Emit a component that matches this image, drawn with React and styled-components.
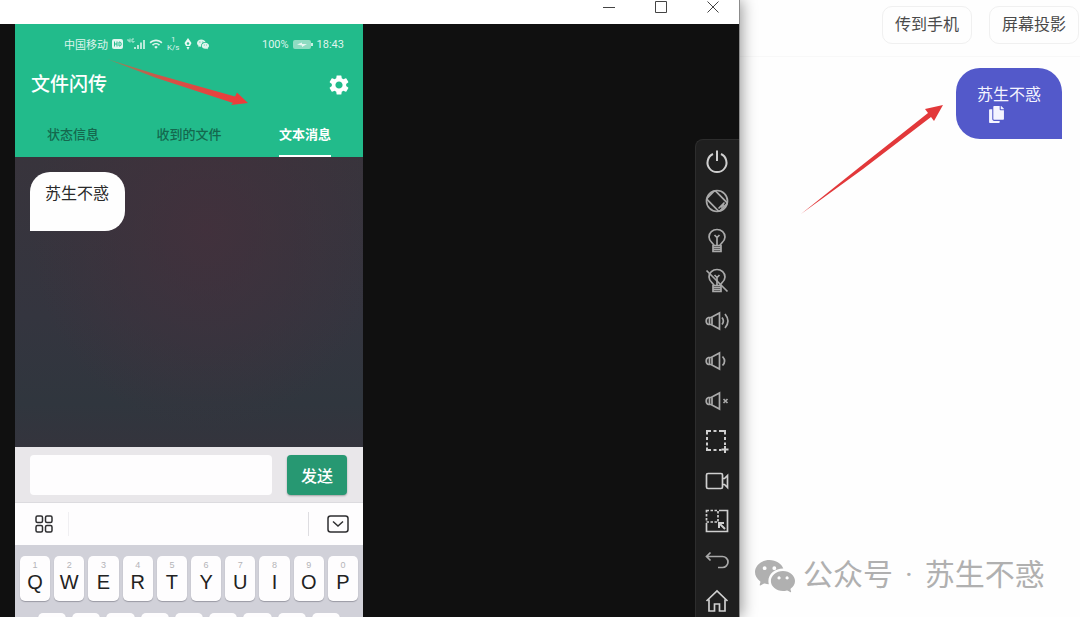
import React from "react";
import styled, { createGlobalStyle } from "styled-components";
import { BsWechat } from "react-icons/bs";
import { FaCopy } from "react-icons/fa";
import { MdSettings, MdWifi } from "react-icons/md";

const TABS = ["状态信息", "收到的文件", "文本消息"];
const FIRST_ROW = ["Q", "W", "E", "R", "T", "Y", "U", "I", "O", "P"];
const SECOND_ROW = ["A", "S", "D", "F", "G", "H", "J", "K", "L"];

const speaker = (
  <>
    <path d="M14.5 4v16L6 15.500H3.500C2 15 1.200 13.500 1.200 12s.8-3 2.300-3.500H6z" />
    <path d="M4.500 8.500v7M7 8.300v7.400" />
  </>
);

const bulb = (
  <>
    <path d="M9 16.500c0-2-5-3.500-5-8.500a8 7.500 0 0 1 16 0c0 5-5 6.500-5 8.500" />
    <path d="M12 16.500V7M9.500 6l2.500 2.500L14.500 6" />
    <path d="M8 16.500h8v6H8zM8 18.500h8M8 20.500h8" />
  </>
);

const TOOLS = [
  {
    label: "电源",
    bright: true,
    icon: <path d="M8 5a9.500 9.500 0 1 0 8 0M12 1.500v10.500" strokeWidth="2" />,
  },
  {
    label: "旋转屏幕",
    icon: (
      <>
        <circle cx="12" cy="12" r="10.500" />
        <rect
          x="6"
          y="3"
          width="12"
          height="18"
          rx="1.500"
          transform="rotate(-45 12 12)"
        />
        <path d="M13.500 19.500l6-6M16 18.500l3-3" />
      </>
    ),
  },
  { label: "点亮屏幕", icon: bulb },
  {
    label: "关闭屏幕",
    icon: (
      <>
        {bulb}
        <path d="M1.500 1.500l21 21" />
      </>
    ),
  },
  {
    label: "音量加",
    icon: (
      <>
        {speaker}
        <path d="M17 8.500c1.800 2.300 1.800 4.700 0 7M20 5c3.800 4.500 3.800 9.500 0 14" />
      </>
    ),
  },
  {
    label: "音量减",
    icon: (
      <>
        {speaker}
        <path d="M17.500 7.500c2.800 3 2.800 6 0 9" />
      </>
    ),
  },
  {
    label: "静音",
    icon: (
      <>
        {speaker}
        <path d="M18.500 10l4 4M22.500 10l-4 4" />
      </>
    ),
  },
  {
    label: "截屏",
    bright: true,
    icon: (
      <>
        <path
          d="M2 5.500V2h4M8.500 2h3M14 2h6v3.500M20 8v3M20 13.500V16M2 8v3M2 13.500v3M2 18.500V21h4M8.500 21h3M14 21h2.500"
          strokeWidth="2"
        />
        <path d="M20 17v7M16.500 20.500h7" strokeWidth="2" />
      </>
    ),
  },
  {
    label: "录屏",
    bright: true,
    icon: (
      <>
        <rect x="1.500" y="4.500" width="16" height="15" rx="1.500" />
        <path d="M17.500 9.500h2l3-3v12l-3-3h-2" />
      </>
    ),
  },
  {
    label: "缩放",
    bright: true,
    icon: (
      <>
        <path d="M14 1.500h8.500v21H1.500V14" />
        <path d="M1.500 1.500h11.500v11.500H1.500z" strokeDasharray="2.500 1.500" />
        <path d="M20 20l-6-6M14 19v-5h5" strokeWidth="2" />
      </>
    ),
  },
  {
    label: "返回",
    icon: <path d="M5.500 3.500L1.500 7.500l4 4M1.500 7.500H17.500a5.500 5.500 0 0 1 0 11H13" />,
  },
  {
    label: "主页",
    bright: true,
    icon: (
      <path d="M1.500 12L12 2l10.500 10M4 10.500V22h5.500v-7h5v7H20V10.500" />
    ),
  },
];

const App = () => {
  return (
    <>
      <GlobalStyle />
      <Screen>
        <MirrorWindow>
          <TitleBar>
            <WindowButton aria-label="最小化">
              <svg width="12" height="12" viewBox="0 0 12 12">
                <path d="M0 6.500h12" />
              </svg>
            </WindowButton>
            <WindowButton aria-label="最大化">
              <svg width="12" height="12" viewBox="0 0 12 12">
                <path d="M.5.5h11v11H.5z" />
              </svg>
            </WindowButton>
            <WindowButton aria-label="关闭">
              <svg width="12" height="12" viewBox="0 0 12 12">
                <path d="M.5.5l11 11M11.500.5l-11 11" />
              </svg>
            </WindowButton>
          </TitleBar>
          <WindowBody>
            <Phone>
              <AppHeader>
                <StatusBar>
                  <StatusGroup>
                    <span>中国移动</span>
                    <svg width="11" height="10" viewBox="0 0 11 10">
                      <rect width="11" height="10" rx="2" fill="#e2f6ef" />
                      <path
                        d="M2.500 2.500v5M5 2.500v5M2.500 5H5M7 3v4h.7a1.500 2 0 0 0 0-4z"
                        stroke="#22bb8b"
                        fill="none"
                      />
                    </svg>
                    <svg width="18" height="12" viewBox="0 0 18 12">
                      <path
                        d="M1 1v2h2M3 .5v4M7 1H5v3h2V3"
                        stroke="#b9ead9"
                        fill="none"
                      />
                      <path
                        d="M8 11V9M11 11V7M14 11V4.500M17 11V2"
                        stroke="#c9efe2"
                        strokeWidth="1.800"
                      />
                    </svg>
                    <MdWifi size={14} />
                    <NetSpeed>
                      <span>1</span>
                      <span>K/s</span>
                    </NetSpeed>
                    <svg width="10" height="12" viewBox="0 0 10 12">
                      <path
                        d="M5 0l3.500 5L7 8H3L1.500 5zM3.500 9h3L5 12z"
                        fill="#e8f8f2"
                      />
                      <circle cx="5" cy="5.500" r="1.200" fill="#22bb8b" />
                    </svg>
                    <BsWechat size={12} />
                  </StatusGroup>
                  <StatusGroup>
                    <span>100%</span>
                    <svg width="20" height="9" viewBox="0 0 20 9">
                      <rect width="18" height="9" rx="2" fill="#8fdcc2" />
                      <path d="M19 3v3" stroke="#c9efe2" strokeWidth="2" />
                      <path d="M4 4.500l5-2v1.500h5l-5 3V5.500z" fill="#e8f8f2" />
                    </svg>
                    <span>18:43</span>
                  </StatusGroup>
                </StatusBar>
                <TitleRow>
                  <AppTitle>文件闪传</AppTitle>
                  <IconButton aria-label="设置">
                    <MdSettings size={24} />
                  </IconButton>
                </TitleRow>
                <TabList role="tablist">
                  {TABS.map((name, index) => (
                    <Tab
                      key={name}
                      role="tab"
                      aria-selected={index === 2}
                      $active={index === 2}
                    >
                      <span>{name}</span>
                    </Tab>
                  ))}
                </TabList>
                <HeaderArrow viewBox="0 0 142 46" aria-hidden="true">
                  <defs>
                    <linearGradient id="fadeIn">
                      <stop offset="0" stopColor="#8a8a5c" />
                      <stop offset="0.4" stopColor="#d35247" />
                      <stop offset="1" stopColor="#f03a3a" />
                    </linearGradient>
                  </defs>
                  <path
                    d="M0 0L48 15 128 37.500 130 33.500 141 44 124 46 126 44 48 18.500z"
                    fill="url(#fadeIn)"
                  />
                </HeaderArrow>
              </AppHeader>
              <Messages>
                <ReceivedBubble>苏生不惑</ReceivedBubble>
              </Messages>
              <Composer>
                <MessageInput aria-label="消息" />
                <SendButton>发送</SendButton>
              </Composer>
              <KeyboardTools>
                <ToolCell>
                  <IconButton aria-label="键盘菜单">
                    <svg
                      width="18"
                      height="18"
                      viewBox="0 0 18 18"
                      fill="none"
                      stroke="#2e2e30"
                      strokeWidth="1.500"
                    >
                      <rect x="1" y="1" width="6.500" height="6.500" rx="1.500" />
                      <rect x="10.500" y="1" width="6.500" height="6.500" rx="1.500" />
                      <rect x="1" y="10.500" width="6.500" height="6.500" rx="1.500" />
                      <rect x="10.500" y="10.500" width="6.500" height="6.500" rx="1.500" />
                    </svg>
                  </IconButton>
                </ToolCell>
                <ToolCell $end>
                  <IconButton aria-label="收起键盘">
                    <svg
                      width="22"
                      height="18"
                      viewBox="0 0 22 18"
                      fill="none"
                      stroke="#2e2e30"
                      strokeWidth="1.500"
                    >
                      <rect x="1" y="1" width="20" height="16" rx="2.500" />
                      <path d="M6 6.500L11 11l5-4.500" />
                    </svg>
                  </IconButton>
                </ToolCell>
              </KeyboardTools>
              <Keyboard>
                <KeyRow>
                  {FIRST_ROW.map((letter, index) => (
                    <Key key={letter}>
                      <small>{(index + 1) % 10}</small>
                      <span>{letter}</span>
                    </Key>
                  ))}
                </KeyRow>
                <KeyRow $indent>
                  {SECOND_ROW.map((letter) => (
                    <Key key={letter} aria-label={letter} />
                  ))}
                </KeyRow>
              </Keyboard>
            </Phone>
            <ToolBar>
              {TOOLS.map(({ label, icon, bright }) => (
                <ToolButton key={label} aria-label={label} $bright={bright}>
                  <svg width="24" height="24" viewBox="0 0 24 24">
                    {icon}
                  </svg>
                </ToolButton>
              ))}
            </ToolBar>
          </WindowBody>
        </MirrorWindow>
        <WebPanel>
          <WebHeader>
            <OutlineButton>传到手机</OutlineButton>
            <OutlineButton>屏幕投影</OutlineButton>
          </WebHeader>
          <WebMessages>
            <SentBubble>
              <span>苏生不惑</span>
              <IconButton aria-label="复制">
                <FaCopy size={17} />
              </IconButton>
            </SentBubble>
          </WebMessages>
          <PanelArrow viewBox="0 0 142 110" aria-hidden="true">
            <path
              d="M0 109L60 61 127 8 124 4 142 0 133 16 130 12 62 64z"
              fill="#e2383a"
            />
          </PanelArrow>
          <AccountMark>
            <BsWechat size={40} />
            <AccountName>
              <span>公众号</span>
              <span>·</span>
              <span>苏生不惑</span>
            </AccountName>
          </AccountMark>
        </WebPanel>
      </Screen>
    </>
  );
};

export default App;

const GlobalStyle = createGlobalStyle`
  * {
    box-sizing: border-box;
  }
  body {
    margin: 0;
    background: #fefefe;
    font-family: Roboto, "Noto Sans CJK SC", sans-serif;
  }
  button,
  input {
    margin: 0;
    padding: 0;
    border: 0;
    background: none;
    font: inherit;
    color: inherit;
  }
`;

const Screen = styled.div`
  display: flex;
  height: 100vh;
  overflow: hidden;
`;

const MirrorWindow = styled.section`
  position: relative;
  z-index: 1;
  flex: 1;
  display: flex;
  flex-direction: column;
  min-width: 0;
  border-right: 1px solid #8c8c8c;
  box-shadow: 2px 0 14px rgba(0, 0, 0, 0.4);
`;

const TitleBar = styled.header`
  display: flex;
  justify-content: flex-end;
  height: 24px;
  padding-bottom: 10px;
  background: #fff;
`;

const WindowButton = styled.button`
  display: flex;
  align-items: center;
  justify-content: center;
  width: 52px;

  path {
    fill: none;
    stroke: #444;
  }
`;

const WindowBody = styled.div`
  flex: 1;
  display: flex;
  justify-content: space-between;
  min-height: 0;
  padding-left: 15px;
  background: #101010;
`;

const Phone = styled.main`
  display: flex;
  flex-direction: column;
  width: 348px;
`;

const AppHeader = styled.div`
  position: relative;
  background: #22bb8b;
  color: #fff;
`;

const StatusBar = styled.div`
  display: flex;
  justify-content: space-between;
  height: 40px;
  padding: 0 19px 0 49px;
  color: #dff5ed;
  font-size: 11px;
`;

const StatusGroup = styled.div`
  display: flex;
  align-items: center;
  gap: 4px;
`;

const NetSpeed = styled.div`
  display: flex;
  flex-direction: column;
  align-items: center;
  font-size: 8px;
  line-height: 8px;
`;

const TitleRow = styled.div`
  display: flex;
  align-items: center;
  justify-content: space-between;
  height: 44px;
  padding: 0 12px 2px 16px;
`;

const AppTitle = styled.h1`
  margin: 0;
  font-size: 19px;
  font-weight: 500;
  line-height: 28px;
`;

const IconButton = styled.button`
  display: flex;
  align-items: center;
  justify-content: center;
`;

const TabList = styled.div`
  display: flex;
  height: 49px;
`;

const Tab = styled.button`
  flex: 1;
  display: flex;
  justify-content: center;
  color: ${(props) => (props.$active ? "#fff" : "#14684e")};
  font-size: 13px;
  font-weight: ${(props) => (props.$active ? 700 : 500)};

  span {
    height: 49px;
    border-bottom: 2px solid
      ${(props) => (props.$active ? "#fff" : "transparent")};
    line-height: 54px;
  }
`;

const HeaderArrow = styled.svg`
  position: absolute;
  top: 35px;
  left: 92px;
  width: 142px;
  height: 46px;
`;

const Messages = styled.div`
  flex: 1;
  min-height: 0;
  padding: 15px;
  background: radial-gradient(
      ellipse at 55% 25%,
      rgba(68, 48, 60, 0.8),
      rgba(60, 48, 60, 0) 65%
    ),
    linear-gradient(#38343c, #34353f 55%, #30363e 85%, #34343d);
`;

const ReceivedBubble = styled.div`
  width: fit-content;
  height: 59px;
  padding: 10px 16px 8px 15px;
  border-radius: 20px 20px 20px 0;
  background: #fefefe;
  color: #2a2a2a;
  font-size: 16px;
  line-height: 24px;
`;

const Composer = styled.div`
  display: flex;
  gap: 15px;
  padding: 8px 16px 7px 15px;
  background: #e9e7ea;
`;

const MessageInput = styled.input`
  flex: 1;
  min-width: 0;
  height: 40px;
  padding: 0 12px;
  border-radius: 4px;
  background: #fefdfe;
`;

const SendButton = styled.button`
  width: 60px;
  border-radius: 4px;
  background: #279872;
  box-shadow: 0 1px 2px rgba(0, 0, 0, 0.3);
  color: #fff;
  font-size: 16px;
  font-weight: 500;
`;

const KeyboardTools = styled.div`
  display: flex;
  align-items: center;
  justify-content: space-between;
  height: 43px;
  border-top: 1px solid #dcdbdf;
  background: #fefdfe;
`;

const ToolCell = styled.div`
  display: flex;
  align-items: center;
  height: 24px;
  padding: ${(props) => (props.$end ? "0 14px 0 18px" : "0 15px 0 20px")};
  border-left: ${(props) => (props.$end ? "1px solid #dedde1" : "0")};
  border-right: ${(props) => (props.$end ? "0" : "1px solid #f0eff2")};
`;

const Keyboard = styled.div`
  display: flex;
  flex-direction: column;
  gap: 12px;
  height: 72px;
  padding-top: 11px;
  overflow: hidden;
  background: #d1d1d9;
`;

const KeyRow = styled.div`
  display: flex;
  gap: ${(props) => (props.$indent ? 6 : 4)}px;
  padding: 0 ${(props) => (props.$indent ? 23 : 5)}px;
`;

const Key = styled.button`
  flex: 1;
  display: flex;
  flex-direction: column;
  align-items: center;
  min-width: 0;
  height: 45px;
  padding-top: 4px;
  border-radius: 5px;
  background: #fefdfe;
  box-shadow: 0 1px 1px #9a9aa4;
  color: #222;
  font-family: "Liberation Sans", sans-serif;

  small {
    color: #b4b4b8;
    font-size: 9px;
    line-height: 10px;
  }

  span {
    font-size: 20px;
    line-height: 24px;
  }
`;

const ToolBar = styled.aside`
  width: 44px;
  margin-top: 115px;
  padding: 1px 2px 0 0;
  overflow: hidden;
  border: solid #2d2d2d;
  border-width: 1px 0 0 1px;
  border-radius: 8px 0 0 0;
  background: #1f1f1f;
`;

const ToolButton = styled.button`
  display: flex;
  align-items: center;
  justify-content: center;
  width: 100%;
  height: 40px;

  svg {
    overflow: visible;
    fill: none;
    stroke: ${(props) => (props.$bright ? "#cfcfcf" : "#a9a9a9")};
    stroke-width: 1.7;
  }
`;

const WebPanel = styled.section`
  position: relative;
  display: flex;
  flex-direction: column;
  width: 340px;
  background: #fefefe;
`;

const WebHeader = styled.header`
  display: flex;
  justify-content: flex-end;
  gap: 17px;
  padding: 6px 1px 12px;
  border-bottom: 1px solid #f8f8f8;
`;

const OutlineButton = styled.button`
  width: 90px;
  height: 38px;
  border: 1px solid #f0f0f0;
  border-radius: 10px;
  color: #4a4a4a;
  font-size: 16px;
  line-height: 24px;
`;

const WebMessages = styled.div`
  flex: 1;
  display: flex;
  flex-direction: column;
  align-items: flex-end;
  padding: 11px 18px;
`;

const SentBubble = styled.div`
  height: 71px;
  padding: 16px 21px 0;
  border-radius: 24px 24px 0 24px;
  background: #5359ca;
  color: #f4f4ff;
  font-size: 16px;

  span {
    display: block;
    line-height: 22px;
  }

  button {
    margin-left: 11px;
  }
`;

const PanelArrow = styled.svg`
  position: absolute;
  top: 105px;
  right: 137px;
  width: 142px;
  height: 110px;
`;

const AccountMark = styled.footer`
  display: flex;
  align-items: center;
  gap: 8px;
  padding: 0 15px 20px;
  color: #b0b0b0;
`;

const AccountName = styled.div`
  display: flex;
  gap: 12px;
  font-size: 30px;
  font-weight: 400;
  line-height: 44px;
`;
